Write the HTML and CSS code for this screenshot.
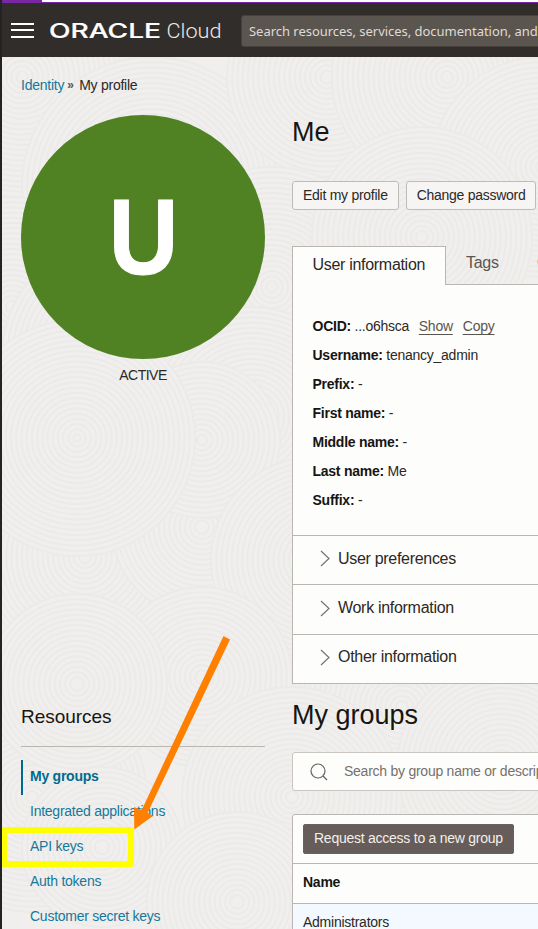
FILE: index.html
```html
<!DOCTYPE html>
<html lang="en">
<head>
<meta charset="utf-8">
<title>My profile</title>
<link rel="stylesheet" href="styles.css">
</head>
<body>
<div class="app">
  <div class="strip"><div class="strip-tab"></div></div>
  <header class="header">
    <div class="burger"><i></i><i></i><i></i></div>
    <svg class="brand" width="174" height="24" viewBox="0 0 174 24" aria-label="Oracle Cloud">
      <text class="brand-oracle" x="-1" y="18.500" textLength="112" lengthAdjust="spacingAndGlyphs">ORACLE</text>
      <text class="brand-cloud" x="116.500" y="18.500" textLength="55" lengthAdjust="spacingAndGlyphs">Cloud</text>
    </svg>
    <div class="search">Search resources, services, documentation, and</div>
  </header>
  <div class="page">
    <svg class="swirls" id="swirls" width="536" height="872" aria-hidden="true"></svg>
    <nav class="crumbs"><a>Identity</a><b>»</b><span>My profile</span></nav>
    <div class="columns">
      <aside class="side">
        <div class="avatar"><span>U</span></div>
        <div class="status">ACTIVE</div>
        <h2 class="side-title">Resources</h2>
        <ul class="nav">
          <li class="active">My groups</li>
          <li>Integrated applications</li>
          <li>API keys</li>
          <li>Auth tokens</li>
          <li>Customer secret keys</li>
        </ul>
      </aside>
      <main class="main">
        <h1>Me</h1>
        <div class="buttons"><button>Edit my profile</button><button>Change password</button></div>
        <div class="tabs"><div class="tab on">User information</div><div class="tab">Tags</div><div class="tab">C</div></div>
        <section class="panel">
          <div class="facts">
            <p><b>OCID:</b> ...o6hsca <u>Show</u><u>Copy</u></p>
            <p><b>Username:</b> tenancy_admin</p>
            <p><b>Prefix:</b> -</p>
            <p><b>First name:</b> -</p>
            <p><b>Middle name:</b> -</p>
            <p><b>Last name:</b> Me</p>
            <p><b>Suffix:</b> -</p>
          </div>
          <div class="fold"><svg width="10" height="17" viewBox="0 0 10 17"><path d="M1 1l8 7.5-8 7.5"/></svg>User preferences</div>
          <div class="fold"><svg width="10" height="17" viewBox="0 0 10 17"><path d="M1 1l8 7.5-8 7.5"/></svg>Work information</div>
          <div class="fold"><svg width="10" height="17" viewBox="0 0 10 17"><path d="M1 1l8 7.5-8 7.5"/></svg>Other information</div>
        </section>
        <h1 class="groups-title">My groups</h1>
        <div class="filter"><svg width="18" height="18" viewBox="0 0 18 18"><circle cx="8" cy="8" r="7"/><path d="M13 13l4 4"/></svg>Search by group name or descrip</div>
        <section class="table">
          <div class="toolbar"><button>Request access to a new group</button></div>
          <div class="thead">Name</div>
          <div class="trow">Administrators</div>
        </section>
      </main>
    </div>
  </div>
  <div class="highlight"></div>
  <svg class="arrow" width="100" height="200" viewBox="0 0 100 200"><path d="M91.500 0L98 3.500L15.700 176.700L21 180L2.300 193.500L2 171L9.700 174Z"/></svg>
</div>
<script src="swirls.js"></script>
</body>
</html>
```
FILE: styles.css
```css
* { box-sizing: border-box; }
body { margin: 0; font: 14px/20px "Liberation Sans", Arial, sans-serif; letter-spacing: -.25px; color: #2c2825; }
h1, h2, p, ul { margin: 0; padding: 0; font-weight: 400; }
button { font: inherit; letter-spacing: inherit; color: inherit; white-space: nowrap; }
.app { position: relative; width: 538px; height: 929px; overflow: hidden; border-left: 2px solid #242323; background: #f0efed; }
.strip { height: 3px; background: #fff; border-bottom: 1px solid #7926a3; }
.strip-tab { width: 40px; height: 2px; background: #7926a3; }
.header { display: flex; align-items: center; height: 54px; background: #312d2a; padding-left: 9px; }
.burger { display: flex; flex-direction: column; gap: 4.5px; width: 23px; flex: none; }
.burger i { height: 2px; background: #fff; }
.brand { flex: none; margin: 1px 17px 0 16px; letter-spacing: 0; overflow: visible; }
.brand text { fill: #fff; }
.brand .brand-oracle { font: 500 19.500px Inter, sans-serif; stroke: #fff; stroke-width: .2; }
.brand .brand-cloud { font: 300 21px Roboto, sans-serif; fill: #eceae8; }
.search { flex: none; width: 420px; height: 32px; margin-top: 1px; padding-left: 7px; border: 1px solid #47413d; border-radius: 3px; background: #5b554f; color: #dedbd7; font: 13px/30px "Noto Sans", sans-serif; letter-spacing: -.03px; white-space: nowrap; }
.page { position: relative; height: 872px; padding: 18px 0 0 19px; }
.swirls { position: absolute; left: 0; top: 0; }
.swirls circle { fill: #f0efed; stroke: #ebeae8; stroke-width: 1.8; }
.crumbs, .columns { position: relative; }
.crumbs { display: flex; height: 20px; }
.crumbs a { color: #16789b; }
.crumbs b { width: 15px; padding-left: 3px; font-size: 12px; color: #5a5550; }
.columns { display: flex; gap: 27px; padding-top: 20px; }
.side { width: 244px; flex: none; }
.avatar { display: flex; align-items: center; justify-content: center; height: 244px; border-radius: 50%; background: #508223; color: #fff; }
.avatar span { margin: -1px 0 0 1px; font: 700 107px/106px "Liberation Sans", Arial, sans-serif; letter-spacing: 0; transform: scaleX(.9); -webkit-text-stroke: 1px #fff; }
.status { text-align: center; line-height: 32px; height: 32px; letter-spacing: -.5px; }
.side-title { margin-top: 311px; height: 45px; font-size: 19px; line-height: 30px; letter-spacing: -.05px; color: #161513; border-bottom: 1px solid #bbb7b0; }
.nav { list-style: none; padding-top: 13px; }
.nav li { height: 35px; line-height: 32px; padding-left: 9px; color: #16789b; }
.nav .active { border-left: 2px solid #006b8f; padding-left: 7px; font-weight: 700; color: #006b8f; }
.main { width: 420px; flex: none; }
h1 { font-size: 27px; line-height: 34px; letter-spacing: -.05px; color: #161513; }
.buttons { display: flex; gap: 7px; margin-top: 32px; }
.buttons button { height: 29px; padding: 0 10px 1px; border: 1px solid #bfbbb6; border-radius: 3px; background: #f6f5f4; letter-spacing: -.27px; }
.tabs { display: flex; height: 39px; margin-top: 36px; font-size: 16px; letter-spacing: -.3px; line-height: 34px; color: #5a5550; }
.tab { padding-left: 20px; border-bottom: 1px solid #bab6b1; width: 71px; }
.tab:last-child { flex: 1; }
.tab.on { width: 154px; border: 1px solid #bab6b1; border-bottom: 0; background: #fdfdfb; color: #2c2825; line-height: 35px; padding-left: 19.500px; }
.panel { border: 1px solid #bab6b1; border-top: 0; background: #fdfdfb; }
.facts { padding: 27px 0 20px 19.500px; }
.facts p { height: 29px; line-height: 29px; }
.facts b { color: #161513; }
.facts u { margin: 0 4px 0 6px; color: #5a5550; text-underline-offset: 3px; }
.fold { display: flex; align-items: center; height: 49.400px; padding: 0 0 3px 27px; gap: 8px; border-top: 1px solid #bab6b1; font-size: 16px; letter-spacing: -.3px; }
.fold path { fill: none; stroke: #77726e; stroke-width: 1.2; }
.groups-title { margin: 14px 0 20px; letter-spacing: 0; }
.filter { display: flex; align-items: center; gap: 16px; height: 39px; padding: 0 0 2px 17px; border: 1px solid #c9c5c1; border-radius: 3px; background: #fdfdfb; color: #77716c; white-space: nowrap; }
.filter svg { margin-top: 2px; fill: none; stroke: #68625e; stroke-width: 1.200; }
.table { margin-top: 23px; border: 1px solid #bab6b1; border-radius: 3px; background: #fdfdfb; }
.toolbar { height: 49px; padding: 9px 10px; border-bottom: 1px solid #bab6b1; }
.toolbar button { display: block; height: 30px; padding: 0 10px 2px; border: 1px solid #6b605d; border-radius: 2px; background: #665c59; color: #f3efeb; }
.thead { height: 40px; padding: 0 10px; line-height: 37px; border-bottom: 1px solid #bab6b1; font-weight: 700; color: #161513; }
.trow { height: 40px; padding: 0 10px; line-height: 37px; background: #f3f9fe; }
.highlight { position: absolute; left: -1px; top: 827px; width: 133px; height: 40px; border: 6px solid #ff0; border-radius: 3px; }
.arrow { position: absolute; left: 130px; top: 636px; fill: #ff8000; }
```
FILE: swirls.js
```js
// Ripple discs painted back to front: [centre x, centre y, outer radius]
const discs = [
  [20, 20, 120], [150, 130, 130], [325, 20, 100], [445, 20, 115], [540, 110, 110],
  [10, 250, 110], [270, 230, 120], [420, 180, 110], [120, 300, 120], [250, 360, 110],
  [20, 490, 110], [83, 500, 110], [200, 470, 90], [200, 383, 78], [75, 381, 118],
  [312, 503, 103], [30, 740, 115], [200, 620, 90], [75, 627, 90], [400, 650, 110],
  [290, 740, 110], [500, 710, 105], [100, 790, 80], [235, 845, 90]
];
const svg = document.getElementById("swirls");
for (const [x, y, outer] of discs) {
  for (let r = outer; r > 2; r -= 5.2) {
    const c = document.createElementNS("http://www.w3.org/2000/svg", "circle");
    c.setAttribute("cx", x);
    c.setAttribute("cy", y);
    c.setAttribute("r", r);
    svg.appendChild(c);
  }
}
```
